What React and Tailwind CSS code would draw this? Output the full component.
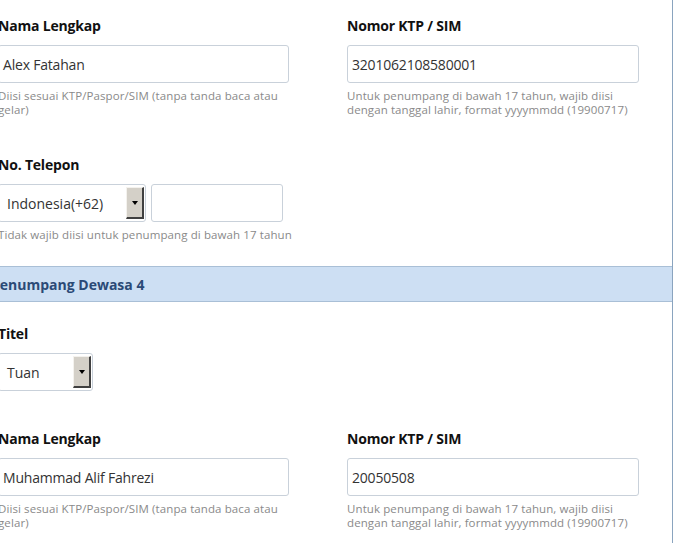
import React from "react";

const font = { fontFamily: '"Open Sans", "DejaVu Sans", sans-serif' };

function Label({ children }) {
  return (
    <div className="text-[14px] leading-[20px] font-bold text-[#111] tracking-[-0.2px] mb-[9px] whitespace-nowrap">
      {children}
    </div>
  );
}

function Help({ children }) {
  return (
    <div className="mt-[6px] text-[11.5px] leading-[14px] tracking-[0.1px] text-[#8a8a8a]">
      {children}
    </div>
  );
}

function TextInput({ value, className = "" }) {
  return (
    <div
      className={`h-[38px] border border-[#c9d1da] rounded-[3px] bg-white flex items-center px-[4px] text-[14px] text-[#333] tracking-[-0.2px] ${className}`}
    >
      {value}
    </div>
  );
}

function Select({ value, width }) {
  return (
    <div
      className={`h-[38px] ${width} border border-[#c9d1da] rounded-[3px] bg-white flex items-stretch p-[2px] pr-[1px]`}
    >
      <span className="flex-1 flex items-center pl-[6px] text-[14px] text-[#333] whitespace-nowrap">
        {value}
      </span>
      <span className="w-[18px] bg-[#d4d0c8] border-l border-t border-[#f4f2ee] border-r-2 border-b-2 border-r-[#404040] border-b-[#404040] flex items-center justify-center">
        <span className="w-0 h-0 border-l-[3px] border-r-[3px] border-t-[4px] border-l-transparent border-r-transparent border-t-black" />
      </span>
    </div>
  );
}

function Field({ label, value, help }) {
  return (
    <div>
      <Label>{label}</Label>
      <TextInput value={value} />
      <Help>{help}</Help>
    </div>
  );
}

function NameRow({ name, ktp }) {
  return (
    <div className="grid grid-cols-[291px_292px] gap-x-[58px]">
      <Field
        label="Nama Lengkap"
        value={name}
        help="Diisi sesuai KTP/Paspor/SIM (tanpa tanda baca atau gelar)"
      />
      <Field
        label="Nomor KTP / SIM"
        value={ktp}
        help="Untuk penumpang di bawah 17 tahun, wajib diisi dengan tanggal lahir, format yyyymmdd (19900717)"
      />
    </div>
  );
}

export default function App() {
  return (
    <div className="bg-white min-h-[543px] overflow-hidden" style={font}>
      <div className="w-[684px] -ml-[11px] border-r border-[#8aa4bf] min-h-[543px]">
        <div className="pl-[9px] pt-[16px] pb-[24px] flex flex-col gap-[38px]">
          <NameRow name="Alex Fatahan" ktp="3201062108580001" />
          <div>
            <Label>No. Telepon</Label>
            <div className="flex gap-[5px]">
              <Select value="Indonesia(+62)" width="w-[148px]" />
              <TextInput value="" className="w-[132px]" />
            </div>
            <Help>Tidak wajib diisi untuk penumpang di bawah 17 tahun</Help>
          </div>
        </div>

        <div className="h-[36px] bg-[#cddff3] border-y border-[#a9bfd6] flex items-center px-[2px] text-[14px] font-bold text-[#2b4a76]">
          Penumpang Dewasa 4
        </div>

        <div className="pl-[9px] pt-[22px] flex flex-col gap-[38px]">
          <div>
            <Label>Titel</Label>
            <Select value="Tuan" width="w-[95px]" />
          </div>
          <NameRow name="Muhammad Alif Fahrezi" ktp="20050508" />
        </div>
      </div>
    </div>
  );
}
